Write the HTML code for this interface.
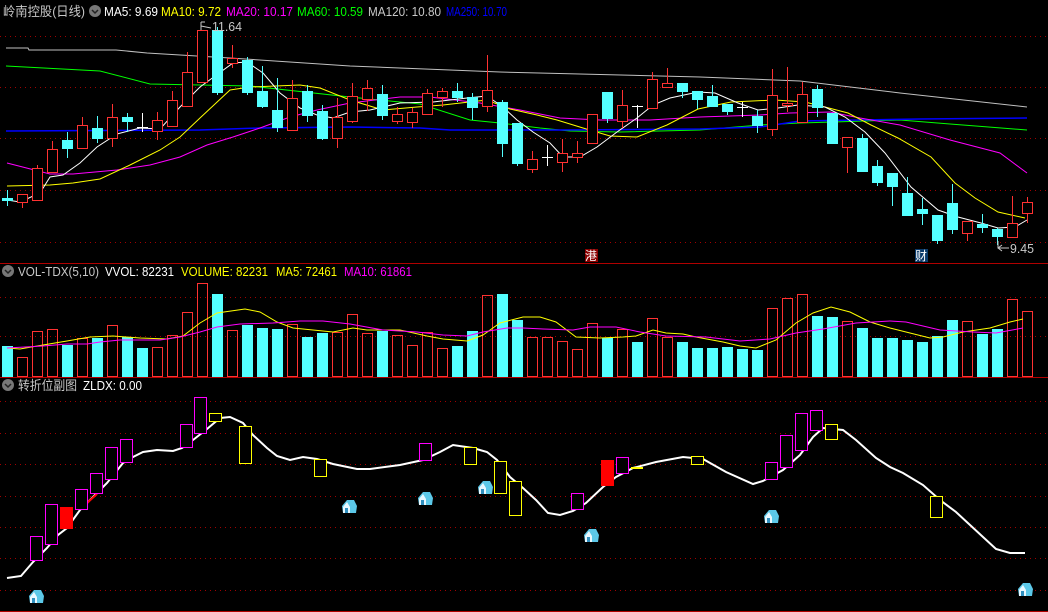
<!DOCTYPE html>
<html><head><meta charset="utf-8">
<style>
html,body{margin:0;padding:0;background:#000;overflow:hidden}
svg{display:block}
text{font-family:"Liberation Sans","Noto Sans CJK SC",sans-serif;font-size:13px}
</style></head>
<body>
<svg id="s" width="1048" height="612" xmlns="http://www.w3.org/2000/svg">
<rect width="1048" height="612" fill="#000"/>
<g stroke="#a00000" stroke-width="1" stroke-dasharray="1,4">
<line x1="0" y1="36.5" x2="1048" y2="36.5"/><line x1="0" y1="87.5" x2="1048" y2="87.5"/>
<line x1="0" y1="138.5" x2="1048" y2="138.5"/><line x1="0" y1="190.5" x2="1048" y2="190.5"/>
<line x1="0" y1="242.5" x2="1048" y2="242.5"/>
<line x1="0" y1="297.5" x2="1048" y2="297.5"/><line x1="0" y1="336.5" x2="1048" y2="336.5"/>
<line x1="0" y1="401.5" x2="1048" y2="401.5"/><line x1="0" y1="433.5" x2="1048" y2="433.5"/>
<line x1="0" y1="464.5" x2="1048" y2="464.5"/><line x1="0" y1="496.5" x2="1048" y2="496.5"/>
<line x1="0" y1="527.5" x2="1048" y2="527.5"/><line x1="0" y1="558.5" x2="1048" y2="558.5"/>
<line x1="0" y1="590.5" x2="1048" y2="590.5"/>
</g>
<g stroke="#b00000" stroke-width="1">
<line x1="0" y1="263.5" x2="1048" y2="263.5"/><line x1="0" y1="377.5" x2="1048" y2="377.5"/>
<line x1="0" y1="611.5" x2="1048" y2="611.5"/>
</g>
<g id="g"></g>
<!-- headers -->
<text x="3" y="16" fill="#c8c8c8" textLength="82" lengthAdjust="spacingAndGlyphs">岭南控股(日线)</text>
<circle cx="95" cy="11" r="6" fill="#777"/><path d="M92 10 L95 13 L98 10" stroke="#222" stroke-width="1.5" fill="none"/>
<text x="104" y="16" fill="#fff" textLength="54" lengthAdjust="spacingAndGlyphs">MA5: 9.69</text>
<text x="161" y="16" fill="#ffff00" textLength="60" lengthAdjust="spacingAndGlyphs">MA10: 9.72</text>
<text x="226" y="16" fill="#ff00ff" textLength="67" lengthAdjust="spacingAndGlyphs">MA20: 10.17</text>
<text x="297" y="16" fill="#00ff00" textLength="66" lengthAdjust="spacingAndGlyphs">MA60: 10.59</text>
<text x="368" y="16" fill="#c8c8c8" textLength="73" lengthAdjust="spacingAndGlyphs">MA120: 10.80</text>
<text x="446" y="16" fill="#0000ff" textLength="61" lengthAdjust="spacingAndGlyphs">MA250: 10.70</text>
<circle cx="8" cy="271" r="6" fill="#777"/><path d="M5 270 L8 273 L11 270" stroke="#222" stroke-width="1.5" fill="none"/>
<text x="18" y="276" fill="#c8c8c8" textLength="81" lengthAdjust="spacingAndGlyphs">VOL-TDX(5,10)</text>
<text x="105" y="276" fill="#fff" textLength="69" lengthAdjust="spacingAndGlyphs">VVOL: 82231</text>
<text x="181" y="276" fill="#ffff00" textLength="87" lengthAdjust="spacingAndGlyphs">VOLUME: 82231</text>
<text x="276" y="276" fill="#ffff00" textLength="61" lengthAdjust="spacingAndGlyphs">MA5: 72461</text>
<text x="344" y="276" fill="#ff00ff" textLength="68" lengthAdjust="spacingAndGlyphs">MA10: 61861</text>
<circle cx="8" cy="385" r="6" fill="#777"/><path d="M5 384 L8 387 L11 384" stroke="#222" stroke-width="1.5" fill="none"/>
<text x="18" y="390" fill="#c8c8c8" textLength="59" lengthAdjust="spacingAndGlyphs">转折位副图</text>
<text x="83" y="390" fill="#fff" textLength="59" lengthAdjust="spacingAndGlyphs">ZLDX: 0.00</text>
<!-- labels -->
<path d="M201 22 L201 30 M201 22 L205 22 M201 26 L211 28" stroke="#c8c8c8" fill="none"/>
<text x="212" y="31" fill="#c8c8c8" textLength="30" lengthAdjust="spacingAndGlyphs">11.64</text>
<path d="M998 241 L998 248 L1009 248 M998 248 L1002 245 M998 248 L1002 251" stroke="#c8c8c8" fill="none"/>
<text x="1010" y="253" fill="#c8c8c8" textLength="24" lengthAdjust="spacingAndGlyphs">9.45</text>
<rect x="585" y="249" width="13" height="13" fill="#8a0000"/>
<text x="585" y="260" fill="#fff" style="font-size:12px">港</text>
<rect x="915" y="249" width="13" height="13" fill="#0a3a6a"/>
<text x="915" y="260" fill="#fff" style="font-size:12px">财</text>
</svg>
<script>
var NS="http://www.w3.org/2000/svg",G=document.getElementById("g");
function el(t,a){var e=document.createElementNS(NS,t);for(var k in a)e.setAttribute(k,a[k]);G.appendChild(e);return e;}
var R="#ff3232",C="#54ffff",W="#fff";
// [color, bodyTop, bodyBot, wickTop, wickBot]
var K=[
[C,198,200,190,206],[R,194,202,194,208],[R,168,200,165,200],[R,149,172,141,172],[C,140,148,132,158],
[R,125,148,117,148],[C,128,138,116,143],[R,117,138,104,147],[C,117,121,113,132],[W,127,127,113,132],
[R,120,131,112,140],[R,100,126,91,126],[R,72,106,52,106],[R,30,82,30,82],[C,30,92,27,95],
[R,58,63,45,68],[C,60,92,57,95],[C,91,106,66,108],[C,110,127,78,132],[R,98,130,80,130],
[C,91,115,85,122],[C,111,138,105,140],[R,117,138,98,148],
[R,96,121,83,123],[R,88,99,80,111],[C,94,115,85,120],[R,114,121,107,124],[R,112,122,108,128],
[R,93,114,89,114],[R,91,97,88,107],[C,91,97,83,102],[C,97,107,93,120],[R,90,106,55,112],
[C,102,143,100,157],[C,123,163,123,166],[R,159,169,151,173],[W,157,157,145,166],[R,153,162,139,172],
[R,153,157,141,163],[R,114,143,114,143],[C,92,118,92,123],[R,105,121,90,128],[W,106,106,105,128],
[R,79,108,72,108],[R,83,87,68,87],[C,83,91,83,98],[C,91,99,91,109],
[C,96,106,85,106],[C,104,111,104,115],[W,107,107,102,117],[C,116,125,110,133],[R,95,129,69,136],
[R,103,105,67,112],[R,94,122,82,122],[C,89,107,85,117],[C,113,143,113,144],[R,137,147,137,173],
[C,138,171,134,171],[C,166,182,160,186],[C,173,186,173,206],[C,193,215,177,215],[C,209,213,198,225],
[C,215,240,215,244],[C,203,229,184,234],[R,221,233,221,241],[C,224,227,214,233],[C,229,236,228,245],
[R,223,237,196,237],[R,202,213,197,223]];
var V=[[C,346],[R,357],[R,331],[R,329],[C,345],[R,338],[C,338],[R,325],[C,337],[C,348],[R,347],[R,335],[R,312],[R,283],[C,294],[R,330],[C,325],[C,328],[C,329],[R,324],[C,337],[C,333],[R,332],[R,314],[R,333],[C,331],[R,335],[R,345],[R,332],[R,348],[C,346],[C,331],[R,295],[C,294],[C,320],
[R,337],[R,337],[R,341],[R,349],[R,323],[C,338],[R,329],[C,342],[R,318],[R,337],[C,342],[C,348],[C,348],[C,347],[C,349],[C,350],[R,308],[R,298],[R,294],[C,316],[C,317],[R,321],[C,328],[C,338],[C,338],[C,340],[C,342],[C,336],[C,320],[R,321],[C,334],[C,329],[R,299],[R,311]];
function pl(pts,col,w){el("polyline",{points:pts.map(function(p){return p.join(",")}).join(" "),fill:"none",stroke:col,"stroke-width":w||1});}
// MA lines
pl([[6,48],[28,48],[29,50],[116,50],[147,53],[230,58],[350,66],[500,72],[700,77],[800,81],[900,93],[1027,107]],"#c0c0c0");
pl([[6,66],[100,71],[150,84],[250,86],[350,97],[420,104],[470,120],[500,123],[540,128],[570,131],[620,132],[700,130],[760,125],[800,123],[900,120],[950,124],[1027,130]],"#00ff00");
pl([[6,131],[200,130],[260,128],[350,127],[420,128],[450,130],[560,130],[700,129],[760,127],[800,121],[920,119],[1027,118]],"#0000ff",1.5);
pl([[7,163],[50,174],[73,174],[117,170],[150,165],[180,157],[207,145],[233,137],[260,128],[290,117],[317,110],[350,103],[400,97],[430,97],[480,103],[520,110],[560,118],[600,120],[650,120],[700,117],[760,115],[790,113],[830,112],[860,118],[900,125],[950,140],[1000,153],[1027,173]],"#ff00ff");
pl([[7,186],[50,185],[73,183],[100,179],[130,165],[160,150],[180,137],[200,118],[230,90],[250,87],[300,85],[320,88],[350,100],[383,110],[417,107],[443,105],[487,100],[510,109],[537,115],[557,120],[583,128],[610,136],[637,137],[667,125],[698,109],[731,102],[775,100],[805,102],[825,107],[848,113],[871,125],[898,138],[931,157],[955,183],[975,198],[998,212],[1025,218]],"#ffff00");
pl([[7,200],[20,202],[40,193],[50,177],[63,175],[80,163],[97,147],[117,134],[140,128],[160,129],[180,107],[200,87],[233,63],[247,62],[263,73],[280,93],[300,108],[317,115],[333,118],[350,112],[370,110],[400,103],[433,102],[467,98],[487,96],[503,107],[517,120],[533,132],[550,143],[563,157],[580,157],[597,147],[617,132],[637,118],[653,105],[670,98],[698,92],[715,93],[738,103],[758,110],[778,108],[798,105],[825,107],[845,117],[865,132],[885,153],[911,187],[938,210],[958,217],[981,223],[998,228],[1015,227],[1027,220]],"#fff");
// candles
K.forEach(function(k,i){var x=7+15*i,c=k[0];
 el("line",{x1:x+.5,y1:k[3],x2:x+.5,y2:k[4],stroke:c});
 if(c==W){el("line",{x1:x-5,y1:k[1]+.5,x2:x+6,y2:k[1]+.5,stroke:c});return;}
 var h=Math.max(k[2]-k[1],1);
 if(c==R){el("line",{x1:x+.5,y1:k[3],x2:x+.5,y2:k[1],stroke:c});
   el("rect",{x:x-4.5,y:k[1]+.5,width:10,height:h,fill:"#000",stroke:c});}
 else el("rect",{x:x-5,y:k[1],width:11,height:h+1,fill:c});
});
// volume
V.forEach(function(v,i){var x=7+15*i;
 if(v[0]==R)el("rect",{x:x-4.5,y:v[1]+.5,width:10,height:376-v[1],fill:"none",stroke:R});
 else el("rect",{x:x-5,y:v[1],width:11,height:377-v[1],fill:C});});
pl([[7,348],[20,349],[43,345],[67,341],[90,337],[113,336],[140,338],[167,339],[183,336],[200,323],[217,313],[245,309],[260,312],[277,322],[293,328],[313,330],[333,332],[353,328],[367,330],[400,330],[427,336],[443,339],[467,341],[483,335],[500,323],[523,317],[540,317],[556,322],[576,337],[600,338],[623,337],[636,336],[653,330],[666,333],[683,334],[696,337],[723,342],[740,346],[756,348],[776,340],[796,323],[813,313],[831,307],[850,312],[870,322],[890,328],[910,333],[930,338],[943,337],[963,332],[990,328],[1010,322],[1023,319]],"#ffff00");
pl([[7,348],[43,346],[67,344],[87,344],[100,342],[120,340],[160,340],[180,337],[200,332],[217,327],[240,324],[273,323],[300,321],[323,321],[350,324],[383,330],[417,332],[443,335],[467,336],[483,332],[507,328],[523,328],[543,329],[573,330],[590,327],[616,327],[640,332],[666,336],[706,337],[740,341],[770,339],[796,333],[823,329],[856,323],[890,321],[906,322],[940,330],[973,332],[996,333],[1023,328]],"#ff00ff");
// bottom panel line
pl([[7,578],[21,576],[33,562],[47,548],[58,535],[67,528],[80,510],[97,493],[107,483],[123,463],[133,457],[143,452],[157,450],[173,451],[182,448],[193,440],[207,429],[220,418],[230,417],[243,423],[253,435],[267,448],[277,456],[290,460],[303,457],[317,459],[333,464],[357,469],[370,469],[400,465],[423,460],[440,452],[453,445],[473,448],[487,452],[497,460],[510,477],[523,488],[536,500],[548,513],[560,515],[573,511],[586,503],[603,487],[616,477],[633,468],[656,462],[683,457],[703,459],[726,472],[753,484],[763,481],[783,470],[800,455],[813,437],[823,428],[843,430],[856,440],[876,458],[890,467],[903,473],[923,485],[940,500],[956,512],[983,537],[996,549],[1010,553],[1025,553]],"#fff",2);
el("line",{x1:87,y1:503,x2:97,y2:494,stroke:"#ff0000","stroke-width":2});
el("line",{x1:631,y1:468,x2:643,y2:468,stroke:"#ffff00","stroke-width":2});
var M="#ff00ff",Y="#ffff00";
[[M,30,42,536,560],[M,45,57,504,544],[M,75,87,489,509],[M,90,102,473,493],[M,105,117,447,479],[M,120,132,439,462],[M,180,192,424,447],[M,194,206,397,433],[M,419,431,443,460],
[Y,209,221,413,421],[Y,239,251,426,463],[Y,314,326,459,476],[Y,464,476,447,464],[Y,494,506,461,493],[Y,509,521,481,515],
[M,571,583,493,509],[M,616,628,457,473],[M,765,777,462,479],[M,780,792,435,467],[M,795,807,413,450],[M,810,822,410,430],
[Y,691,703,456,464],[Y,825,837,424,439],[Y,930,942,496,517]].forEach(function(b){
 el("rect",{x:b[1]+.5,y:b[3]+.5,width:b[2]-b[1],height:b[4]-b[3],fill:"#000",stroke:b[0]});});
el("rect",{x:60,y:507,width:13,height:22,fill:"#ff0000"});
el("rect",{x:601,y:460,width:13,height:26,fill:"#ff0000"});
// houses
[[36,597],[349,507],[425,499],[485,488],[591,536],[771,517],[1025,590]].forEach(function(h){var x=h[0],y=h[1];
 el("path",{d:"M"+(x-7)+" "+(y-1)+" L"+(x-2)+" "+(y-7)+" L"+(x+5)+" "+(y-7)+" L"+(x+8)+" "+(y-1)+" L"+(x+7)+" "+(y+6)+" L"+(x-6)+" "+(y+6)+" Z",fill:"#5cc8e8"});
 el("path",{d:"M"+(x-6)+" "+(y)+" L"+(x-2)+" "+(y-5)+" L"+(x+1)+" "+(y)+" L"+(x+1)+" "+(y+6)+" L"+(x-6)+" "+(y+6)+" Z",fill:"#e8f8ff"});
 el("rect",{x:x-4,y:y+1,width:3,height:5,fill:"#3090c0"});});
</script>
</body></html>
